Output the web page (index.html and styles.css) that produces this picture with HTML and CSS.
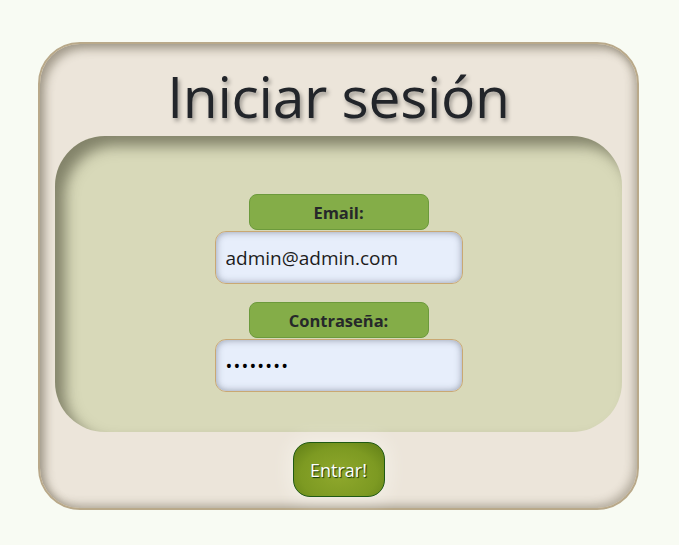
FILE: index.html
```html
<!DOCTYPE html>
<html lang="es">
<head>
<meta charset="utf-8">
<title>Iniciar sesión</title>
<link rel="stylesheet" href="styles.css">
</head>
<body>
<form class="card">
  <h1 class="title">Iniciar sesión</h1>
  <div class="panel">
    <div class="field">
      <label class="label" for="email">Email:</label>
      <input class="input" id="email" type="text" value="admin@admin.com">
    </div>
    <div class="field">
      <label class="label" for="pass">Contraseña:</label>
      <input class="input pass" id="pass" type="password" value="admin123">
    </div>
  </div>
  <button class="btn" type="button">Entrar!</button>
</form>
</body>
</html>
```
FILE: styles.css
```css
html, body {
  margin: 0;
  padding: 0;
  background: #f8fbf3;
  font-family: "Open Sans", "Noto Sans", sans-serif;
}
body {
  padding: 42px 0 0 38px;
}
.card {
  box-sizing: border-box;
  width: 601px;
  height: 468px;
  border: 2px solid #b9a98a;
  border-radius: 42px;
  background: #ece5da;
  box-shadow: inset 5px 5px 10px rgba(80, 70, 50, 0.45), inset -4px -4px 8px rgba(80, 70, 50, 0.3);
  display: flex;
  flex-direction: column;
  align-items: center;
  padding: 13px 15px 0 15px;
}
.title {
  margin: 0;
  font-weight: 400;
  font-size: 57px;
  line-height: 79px;
  color: #22252a;
  text-shadow: 2px 3px 4px rgba(0, 0, 0, 0.35);
  letter-spacing: -0.3px;
}
.panel {
  box-sizing: border-box;
  align-self: stretch;
  height: 296px;
  border-radius: 50px;
  background: #d8d9b9;
  box-shadow: inset 10px 10px 14px rgba(60, 60, 40, 0.55);
  display: flex;
  flex-direction: column;
  align-items: center;
  gap: 18px;
  padding-top: 58px;
}
.field {
  display: flex;
  flex-direction: column;
  align-items: center;
  gap: 1px;
}
.label {
  box-sizing: border-box;
  width: 180px;
  height: 36px;
  background: #84ad48;
  border: 1px solid #6c9a3c;
  border-radius: 8px;
  font-weight: 700;
  font-size: 16.5px;
  color: #26282a;
  display: flex;
  align-items: center;
  justify-content: center;
}
.input {
  box-sizing: border-box;
  width: 248px;
  height: 53px;
  background: #e7eefb;
  border: 1px solid #c9a873;
  border-radius: 11px;
  box-shadow: inset 0 0 7px rgba(60, 70, 90, 0.5);
  font-family: "Open Sans", "Noto Sans", sans-serif;
  font-size: 19px;
  color: #1c1c1c;
  padding: 0 10px;
  outline: none;
}
.pass {
  font-size: 18px;
  letter-spacing: 1.2px;
  color: #000;
}
.btn {
  box-sizing: border-box;
  margin-top: 10px;
  width: 92px;
  height: 55px;
  border: 1px solid #1f5a14;
  border-radius: 17px;
  background: radial-gradient(ellipse at 50% 60%, #8fa82c 0%, #7d9a22 60%, #5f7d16 100%);
  box-shadow: 0 0 18px 6px rgba(255, 255, 250, 0.35);
  color: #fff;
  font-family: "Open Sans", "Noto Sans", sans-serif;
  font-size: 18px;
  text-shadow: 1px 1px 1px rgba(0, 40, 0, 0.9);
  cursor: pointer;
}
```
